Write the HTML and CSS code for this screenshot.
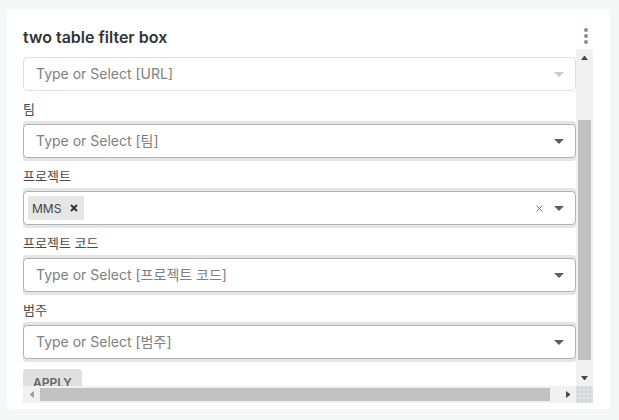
FILE: index.html
```html
<!DOCTYPE html>
<html lang="ko">
<head>
<meta charset="utf-8">
<title>two table filter box</title>
<link rel="stylesheet" href="styles.css">
</head>
<body>
<main class="card">
  <header class="card-header">
    <h1 class="title">two table filter box</h1>
    <button class="menu" type="button" aria-label="More options">
      <svg width="4" height="16" viewBox="0 0 4 16"><circle cx="2" cy="2" r="2"/><circle cx="2" cy="8" r="2"/><circle cx="2" cy="14" r="2"/></svg>
    </button>
  </header>
  <div class="scroller">
    <form class="filters">
      <div class="control disabled">
        <input class="entry" type="text" placeholder="Type or Select [URL]" aria-label="URL" disabled>
        <svg class="caret" width="10" height="5" viewBox="0 0 10 5"><path d="M0 0H10L5 5Z"/></svg>
      </div>
      <label class="label" for="team">팀</label>
      <div class="control active">
        <input class="entry" id="team" type="text" placeholder="Type or Select [팀]">
        <svg class="caret" width="10" height="5" viewBox="0 0 10 5"><path d="M0 0H10L5 5Z"/></svg>
      </div>
      <label class="label" for="project">프로젝트</label>
      <div class="control active">
        <span class="tag">MMS
          <button class="remove" type="button" aria-label="Remove MMS"><svg width="8" height="8" viewBox="0 0 8 8"><path d="M1 1L7 7M7 1L1 7"/></svg></button>
        </span>
        <input class="entry" id="project" type="text">
        <button class="clear" type="button" aria-label="Clear"><svg width="7" height="7" viewBox="0 0 7 7"><path d="M.5 .5L6.500 6.500M6.500 .5L.5 6.500"/></svg></button>
        <svg class="caret" width="10" height="5" viewBox="0 0 10 5"><path d="M0 0H10L5 5Z"/></svg>
      </div>
      <label class="label" for="code">프로젝트 코드</label>
      <div class="control active">
        <input class="entry" id="code" type="text" placeholder="Type or Select [프로젝트 코드]">
        <svg class="caret" width="10" height="5" viewBox="0 0 10 5"><path d="M0 0H10L5 5Z"/></svg>
      </div>
      <label class="label" for="category">범주</label>
      <div class="control active">
        <input class="entry" id="category" type="text" placeholder="Type or Select [범주]">
        <svg class="caret" width="10" height="5" viewBox="0 0 10 5"><path d="M0 0H10L5 5Z"/></svg>
      </div>
      <button class="apply" type="button">APPLY</button>
    </form>
    <div class="bar vertical">
      <span class="arrow"><svg width="7" height="4" viewBox="0 0 7 4"><path d="M0 4L3 0H4L7 4Z"/></svg></span>
      <span class="before"></span>
      <span class="thumb"></span>
      <span class="after"></span>
      <span class="arrow"><svg width="7" height="4" viewBox="0 0 7 4"><path d="M0 0L3 4H4L7 0Z"/></svg></span>
    </div>
    <div class="bar horizontal">
      <span class="arrow dim"><svg width="4" height="7" viewBox="0 0 4 7"><path d="M4 0L0 3V4L4 7Z"/></svg></span>
      <span class="thumb"></span>
      <span class="after"></span>
      <span class="arrow"><svg width="4" height="7" viewBox="0 0 4 7"><path d="M0 0L4 3V4L0 7Z"/></svg></span>
    </div>
    <div class="corner"></div>
  </div>
</main>
</body>
</html>
```
FILE: styles.css
```css
* {
  box-sizing: border-box;
}

body {
  display: flex;
  height: 100vh;
  margin: 0;
  padding: 9px 9px 11px 7px;
  background: #f6f8f8;
  color: #333;
  font-family: Inter, "Noto Sans CJK KR", sans-serif;
}

button {
  padding: 0;
  border: 0;
  background: none;
  font: inherit;
}

svg {
  display: block;
}

.card {
  display: flex;
  flex: 1;
  flex-direction: column;
  min-width: 0;
  padding: 16px 17px 6px 16px;
  border-radius: 4px;
  background: #fff;
}

.card-header {
  display: flex;
  flex: none;
  justify-content: space-between;
  height: 24px;
}

.title {
  margin: 0;
  font-size: 16px;
  font-weight: 600;
  line-height: 24px;
}

.menu {
  width: 14px;
  height: 22px;
}

.menu svg {
  margin: auto;
  fill: #848ead;
}

.scroller {
  display: grid;
  flex: 1;
  grid-template: minmax(0, 1fr) 17px / minmax(0, 1fr) 17px;
  min-height: 0;
}

.filters {
  display: flex;
  flex-direction: column;
  overflow: hidden;
  padding-top: 8px;
}

.control {
  display: flex;
  flex: none;
  align-items: center;
  height: 34px;
  padding-right: 11px;
  border: 1px solid #b2b2b2;
  border-radius: 4px;
  background: #fff;
}

.control.disabled {
  border-color: #e0e0e0;
}

.control.active {
  box-shadow: 0 0 0 3px #e5e5e5;
}

.entry {
  flex: 1;
  min-width: 0;
  height: 32px;
  padding: 0 12px 2px;
  border: 0;
  outline: 0;
  background: none;
  color: #333;
  font-family: inherit;
  font-size: 14px;
}

.entry::placeholder {
  color: #808080;
  opacity: 1;
}

.caret {
  flex: none;
  fill: #5c5c66;
}

.disabled .caret {
  fill: #c8cacc;
}

.label {
  flex: none;
  height: 33px;
  padding-top: 8px;
  color: #484848;
  font-size: 13px;
  line-height: 20px;
}

.tag {
  display: flex;
  align-items: center;
  gap: 9px;
  height: 24px;
  margin-left: 4px;
  padding: 0 6px 0 4px;
  border-radius: 2px;
  background: #e6e6e6;
  color: #444;
  font-size: 12px;
}

.remove svg {
  fill: none;
  stroke: #333;
  stroke-width: 2;
}

.clear {
  margin-right: 11px;
}

.clear svg {
  fill: none;
  stroke: #777;
}

.apply {
  flex: none;
  align-self: flex-start;
  height: 28px;
  margin-top: 10px;
  padding: 0 10px 2px;
  border-radius: 4px;
  background: #e0e0e0;
  color: #666;
  font-size: 12px;
  font-weight: 600;
}

.bar {
  display: flex;
  background: #f1f1f1;
}

.vertical {
  flex-direction: column;
}

.arrow {
  display: flex;
  flex: none;
  align-items: center;
  justify-content: center;
  width: 17px;
  height: 17px;
  fill: #484850;
}

.dim {
  fill: #9a9ea6;
}

.thumb {
  background: #c1c1c1;
}

.vertical .before {
  flex: 54;
}

.vertical .thumb {
  flex: 240;
  margin: 0 2px;
}

.vertical .after {
  flex: 9;
}

.horizontal .thumb {
  flex: 510;
  margin: 2px 0;
}

.horizontal .after {
  flex: 9;
}

.corner {
  background: radial-gradient(#cbd1d4 1px, transparent 1px) 0 0 / 4px 4px #dedfdf;
}
```
